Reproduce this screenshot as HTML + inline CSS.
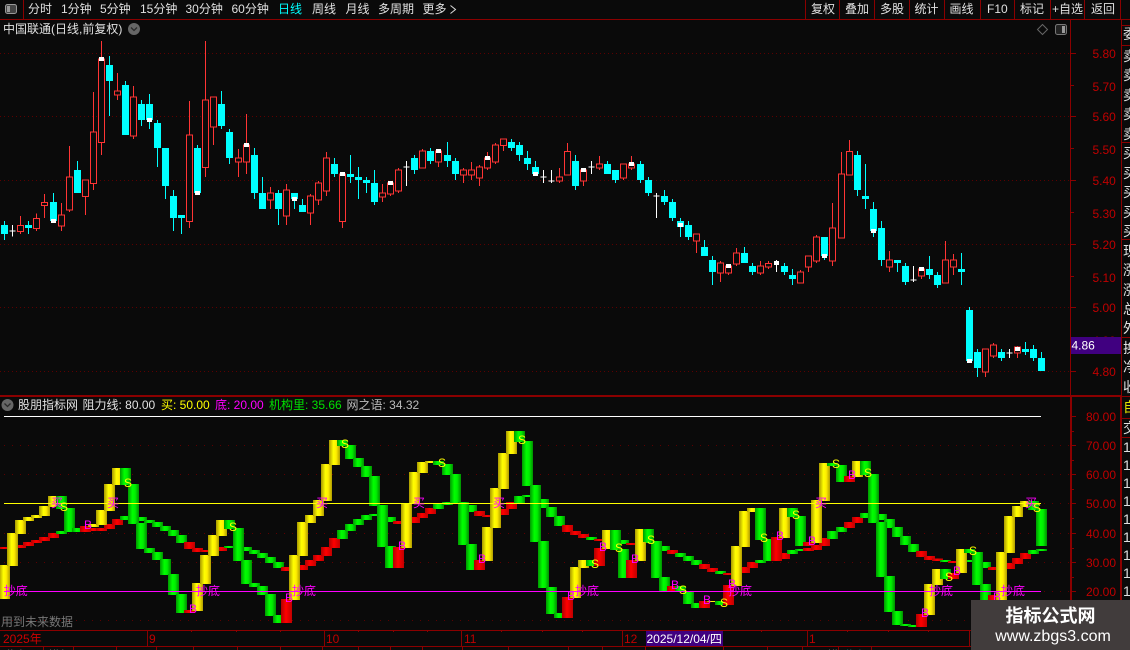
<!DOCTYPE html>
<html lang="zh">
<head>
<meta charset="utf-8">
<title>中国联通 日线</title>
<style>
html,body{margin:0;padding:0;background:#0a0a0a;width:1130px;height:650px;overflow:hidden}
svg{display:block;position:absolute;left:0;top:0}
text{font-family:"Liberation Sans","WenQuanYi Zen Hei","Noto Sans CJK SC",sans-serif;font-size:12px;fill:#e0e0e0;white-space:pre}
.ax{fill:#c00000}
.m{fill:#ff00ff;text-anchor:middle}
.s{fill:#ffff00;text-anchor:middle;font-size:12px}
.b{fill:#ff00ff;text-anchor:middle;font-size:12px}
.n{vector-effect:non-scaling-stroke;fill:none}
.y,.g,.r{width:11px}
.y{fill:url(#gy)}.g{fill:url(#gg)}.r{fill:url(#gr)}
</style>
</head>
<body>
<svg width="1130" height="650" viewBox="0 0 1130 650">
<defs>
<linearGradient id="gy"><stop offset="0" stop-color="#a89800"/><stop offset=".4" stop-color="#ffff00"/><stop offset=".65" stop-color="#ffee00"/><stop offset="1" stop-color="#b09c00"/></linearGradient>
<linearGradient id="gg"><stop offset="0" stop-color="#009800"/><stop offset=".4" stop-color="#00ff00"/><stop offset=".65" stop-color="#00ee00"/><stop offset="1" stop-color="#009000"/></linearGradient>
<linearGradient id="gr"><stop offset="0" stop-color="#b00000"/><stop offset=".45" stop-color="#ff0000"/><stop offset="1" stop-color="#c00000"/></linearGradient>
</defs>

<!-- grid main -->
<g stroke="#5c0000" stroke-dasharray="1 3" shape-rendering="crispEdges">
<path d="M0 53.5H1070M0 116.5H1070M0 180.5H1070M0 244.5H1070M0 307.5H1070M0 371.5H1070"/>
</g>
<!-- grid indicator -->
<g stroke="#5c0000" stroke-dasharray="1 7" shape-rendering="crispEdges">
<path d="M4 445.5H1070M4 474.5H1070M4 503.5H1070M4 533.5H1070M4 562.5H1070M4 591.5H1070M4 620.5H1070"/>
</g>

<!-- candles -->
<g transform="translate(.5,0) scale(1,.33333)" shape-rendering="crispEdges">
<path class="n" stroke="#00ffff" stroke-width="1" d="M4 663V720M28 663V702M53 579V668M77 483V579M109 168V348M125 243V405M141 300V378M149 282V387M157 360V501M165 444V597M173 570V693M181 645V702M197 435V585M221 273V387M229 387V492M254 444V597M262 531V627M278 570V675M294 579V627M302 597V636M334 474V531M350 465V549M358 501V597M366 531V579M374 510V615M414 465V522M430 444V492M447 426V501M455 474V540M511 417V453M519 426V483M527 453V510M535 483V528M575 465V570M607 483V522M615 510V549M640 483V549M648 531V588M664 570V615M672 597V663M680 654V711M688 663V720M704 720V768M712 768V855M744 741V789M752 789V825M784 789V825M792 807V855M824 711V780M857 453V588M865 492V627M873 606V711M881 663V798M897 780V816M905 789V855M929 768V837M937 816V864M961 759V855M969 921V1089M977 1047V1131M1001 1047V1083M1025 1026V1065M1033 1035V1083M1041 1056V1113"/>
<path class="n" stroke="#00ffff" stroke-width="7" d="M4 675V702M28 675V684M53 606V663M77 510V579M109 195V243M125 255V405M141 312V360M149 312V360M157 369V444M165 444V558M173 588V654M181 645V654M197 444V579M221 312V378M229 396V474M254 465V579M262 579V627M278 579V627M294 579V597M302 615V636M334 492V522M350 522V531M358 531V540M366 540V549M374 549V606M414 474V510M430 453V483M447 465V483M455 483V522M511 426V444M519 435V465M527 474V492M535 501V522M575 483V558M607 492V522M615 510V540M640 492V540M648 540V579M664 588V606M672 606V654M680 663V681M688 675V711M704 741V768M712 780V816M744 759V789M752 798V816M784 798V816M792 825V837M824 711V768M857 465V570M865 588V597M873 627V693M881 684V780M897 780V789M905 798V846M929 807V825M937 825V855M961 807V816M969 930V1083M977 1056V1104M1001 1056V1074M1025 1047V1056M1033 1047V1074M1041 1074V1113"/>
<path class="n" stroke="#ff3434" stroke-width="1" d="M20 648V702M36 640V693M44 582V654M61 609V693M69 438V636M85 540V645M93 276V570M101 123V465M117 219V300M133 258V417M189 303V684M205 123V531M213 291V435M238 447V531M246 342V522M270 561V627M286 552V675M310 582V675M318 543V615M326 456V588M342 516V684M382 552V606M390 543V588M398 504V579M422 447V504M438 447V501M463 504V549M471 486V540M479 495V558M487 456V510M495 429V492M503 417V453M559 504V549M567 429V525M583 504V558M599 468V510M623 492V540M631 468V510M696 702V759M720 783V846M728 792V825M736 744V798M760 783V825M768 783V807M800 810V849M808 768V816M816 705V789M832 609V798M841 456V714M849 420V525M889 753V816M921 801V837M945 723V849M953 762V825M985 1047V1131M993 1029V1074M1017 1038V1074"/>
<path class="n" stroke="#ff3434" stroke-width="1" style="fill:#0a0a0a" d="M17 676h6V695h-6zM33 655h6V686h-6zM41 607h6V617h-6zM58 645h6V678h-6zM66 531h6V630h-6zM82 540h6V590h-6zM90 396h6V551h-6zM98 177h6V428h-6zM114 273h6V285h-6zM130 291h6V408h-6zM186 405h6V665h-6zM202 300h6V503h-6zM210 291h6V381h-6zM235 474h6V486h-6zM243 435h6V486h-6zM267 579h6V600h-6zM283 570h6V648h-6zM307 588h6V639h-6zM315 549h6V600h-6zM323 474h6V573h-6zM339 522h6V665h-6zM379 579h6V591h-6zM387 549h6V582h-6zM395 510h6V573h-6zM419 453h6V504h-6zM435 453h6V486h-6zM460 510h6V525h-6zM468 510h6V525h-6zM476 501h6V534h-6zM484 474h6V504h-6zM492 435h6V486h-6zM500 417h6V436h-6zM556 531h6V543h-6zM564 454h6V525h-6zM580 510h6V543h-6zM596 492h6V504h-6zM620 492h6V534h-6zM628 492h6V504h-6zM693 702h6V723h-6zM717 789h6V819h-6zM725 798h6V819h-6zM733 759h6V792h-6zM757 798h6V819h-6zM765 790h6V801h-6zM797 816h6V849h-6zM805 768h6V801h-6zM813 711h6V783h-6zM829 684h6V783h-6zM838 522h6V714h-6zM846 454h6V525h-6zM886 780h6V801h-6zM918 807h6V828h-6zM942 780h6V849h-6zM950 780h6V801h-6zM982 1047h6V1116h-6zM990 1035h6V1068h-6zM1014 1041h6V1059h-6z"/>
<path class="n" stroke="#ffffff" stroke-width="1" d="M12 675V710M9 693h6M406 483V558M403 501h6M543 510V549M540 531h6M551 510V549M548 543h6M591 483V522M588 501h6M656 579V654M653 588h6M776 780V816M913 798V846M910 840h6M1009 1047V1074M1006 1059h6"/>
<path class="n" stroke="#ffffff" stroke-width="5" d="M53 657V669M101 171V183M149 354V366M197 573V585M246 429V441M294 591V603M342 516V528M390 543V555M438 447V459M487 468V480M535 516V528M583 504V516M631 486V498M680 669V681M728 792V804M776 783V795M824 762V774M873 687V699M921 801V813M969 1077V1089M1017 1041V1053"/>
</g>

<!-- indicator -->
<g transform="translate(0,395) scale(1,.33333)" shape-rendering="crispEdges">
<!-- slow -->
<rect class="r" x="-1" y="456" height="6"/><rect class="r" x="15" y="450" height="9"/><rect class="r" x="23" y="441" height="12"/><rect class="r" x="31" y="435" height="9"/><rect class="r" x="39" y="426" height="12"/><rect class="r" x="48" y="414" height="15"/><rect class="g" x="56" y="408" height="9"/><rect class="g" x="64" y="402" height="9"/><rect class="g" x="72" y="399" height="12"/><rect class="r" x="80" y="393" height="18"/><rect class="r" x="88" y="399" height="9"/><rect class="r" x="96" y="399" height="9"/><rect class="r" x="104" y="387" height="15"/><rect class="r" x="112" y="372" height="18"/><rect class="g" x="120" y="363" height="12"/><rect class="g" x="128" y="363" height="15"/><rect class="g" x="136" y="366" height="12"/><rect class="g" x="144" y="375" height="9"/><rect class="g" x="152" y="381" height="15"/><rect class="g" x="160" y="393" height="15"/><rect class="g" x="168" y="405" height="18"/><rect class="g" x="176" y="420" height="24"/><rect class="r" x="184" y="441" height="21"/><rect class="r" x="192" y="459" height="12"/><rect class="r" x="200" y="465" height="6"/><rect class="r" x="216" y="456" height="12"/><rect class="g" x="224" y="453" height="6"/><rect class="g" x="241" y="456" height="12"/><rect class="g" x="249" y="465" height="12"/><rect class="g" x="257" y="474" height="15"/><rect class="g" x="265" y="486" height="18"/><rect class="g" x="273" y="501" height="18"/><rect class="r" x="281" y="516" height="12"/><rect class="r" x="297" y="510" height="15"/><rect class="r" x="305" y="495" height="18"/><rect class="r" x="313" y="480" height="18"/><rect class="r" x="321" y="456" height="27"/><rect class="r" x="329" y="429" height="30"/><rect class="g" x="337" y="405" height="27"/><rect class="g" x="345" y="387" height="21"/><rect class="g" x="353" y="372" height="18"/><rect class="g" x="361" y="360" height="15"/><rect class="g" x="369" y="357" height="6"/><rect class="g" x="385" y="366" height="15"/><rect class="r" x="393" y="378" height="9"/><rect class="r" x="409" y="366" height="18"/><rect class="r" x="417" y="354" height="15"/><rect class="r" x="425" y="339" height="18"/><rect class="g" x="433" y="327" height="15"/><rect class="g" x="442" y="321" height="9"/><rect class="g" x="466" y="330" height="21"/><rect class="r" x="474" y="348" height="15"/><rect class="r" x="482" y="360" height="6"/><rect class="r" x="498" y="342" height="18"/><rect class="r" x="506" y="321" height="21"/><rect class="g" x="514" y="303" height="21"/><rect class="g" x="522" y="300" height="6"/><rect class="g" x="538" y="312" height="27"/><rect class="g" x="546" y="336" height="30"/><rect class="g" x="554" y="363" height="30"/><rect class="r" x="562" y="390" height="21"/><rect class="r" x="570" y="408" height="12"/><rect class="r" x="578" y="417" height="12"/><rect class="g" x="586" y="426" height="9"/><rect class="r" x="594" y="432" height="6"/><rect class="g" x="618" y="435" height="12"/><rect class="r" x="626" y="444" height="6"/><rect class="g" x="643" y="441" height="3"/><rect class="g" x="659" y="453" height="15"/><rect class="r" x="667" y="465" height="12"/><rect class="g" x="675" y="474" height="12"/><rect class="g" x="683" y="483" height="15"/><rect class="g" x="691" y="495" height="15"/><rect class="r" x="699" y="507" height="15"/><rect class="r" x="707" y="519" height="12"/><rect class="g" x="715" y="528" height="9"/><rect class="r" x="723" y="534" height="6"/><rect class="r" x="739" y="516" height="18"/><rect class="r" x="747" y="501" height="18"/><rect class="g" x="755" y="495" height="9"/><rect class="r" x="779" y="474" height="18"/><rect class="g" x="787" y="465" height="12"/><rect class="g" x="795" y="462" height="6"/><rect class="r" x="803" y="459" height="9"/><rect class="r" x="811" y="450" height="15"/><rect class="r" x="819" y="429" height="24"/><rect class="g" x="827" y="408" height="24"/><rect class="g" x="836" y="396" height="15"/><rect class="r" x="844" y="381" height="18"/><rect class="r" x="852" y="366" height="18"/><rect class="g" x="860" y="354" height="15"/><rect class="g" x="868" y="357" height="18"/><rect class="g" x="876" y="357" height="18"/><rect class="g" x="884" y="372" height="27"/><rect class="g" x="892" y="396" height="30"/><rect class="g" x="900" y="423" height="27"/><rect class="g" x="908" y="447" height="24"/><rect class="r" x="916" y="468" height="18"/><rect class="r" x="924" y="483" height="12"/><rect class="r" x="932" y="491" height="7"/><rect class="g" x="940" y="495" height="6"/><rect class="r" x="948" y="498" height="6"/><rect class="g" x="964" y="495" height="6"/><rect class="g" x="980" y="501" height="18"/><rect class="r" x="988" y="516" height="9"/><rect class="r" x="1004" y="504" height="18"/><rect class="r" x="1012" y="489" height="18"/><rect class="r" x="1020" y="474" height="18"/><rect class="g" x="1028" y="465" height="12"/><rect class="g" x="1036" y="462" height="6"/>
<!-- main -->
<rect class="y" x="-1" y="510" height="102"/><rect class="y" x="7" y="414" height="99"/><rect class="y" x="15" y="375" height="42"/><rect class="y" x="23" y="366" height="12"/><rect class="y" x="31" y="360" height="9"/><rect class="y" x="39" y="333" height="30"/><rect class="y" x="48" y="303" height="33"/><rect class="g" x="56" y="303" height="39"/><rect class="g" x="64" y="339" height="63"/><rect class="g" x="72" y="399" height="12"/><rect class="r" x="80" y="393" height="18"/><rect class="y" x="88" y="387" height="9"/><rect class="y" x="96" y="345" height="45"/><rect class="y" x="104" y="267" height="81"/><rect class="y" x="112" y="219" height="51"/><rect class="g" x="120" y="219" height="51"/><rect class="g" x="128" y="267" height="120"/><rect class="g" x="136" y="384" height="78"/><rect class="g" x="144" y="459" height="15"/><rect class="g" x="152" y="471" height="24"/><rect class="g" x="160" y="492" height="48"/><rect class="g" x="168" y="537" height="63"/><rect class="g" x="176" y="597" height="57"/><rect class="r" x="184" y="645" height="9"/><rect class="y" x="192" y="564" height="84"/><rect class="y" x="200" y="480" height="87"/><rect class="y" x="208" y="420" height="63"/><rect class="y" x="216" y="375" height="48"/><rect class="g" x="224" y="375" height="27"/><rect class="g" x="233" y="399" height="99"/><rect class="g" x="241" y="495" height="72"/><rect class="g" x="249" y="564" height="12"/><rect class="g" x="257" y="573" height="27"/><rect class="g" x="265" y="597" height="66"/><rect class="g" x="273" y="660" height="24"/><rect class="r" x="281" y="612" height="72"/><rect class="y" x="289" y="480" height="135"/><rect class="y" x="297" y="381" height="102"/><rect class="y" x="305" y="360" height="24"/><rect class="y" x="313" y="315" height="48"/><rect class="y" x="321" y="207" height="111"/><rect class="y" x="329" y="135" height="75"/><rect class="g" x="337" y="135" height="18"/><rect class="g" x="345" y="150" height="42"/><rect class="g" x="353" y="189" height="27"/><rect class="g" x="361" y="213" height="33"/><rect class="g" x="369" y="243" height="90"/><rect class="g" x="377" y="330" height="126"/><rect class="g" x="385" y="453" height="66"/><rect class="r" x="393" y="456" height="63"/><rect class="y" x="401" y="324" height="135"/><rect class="y" x="409" y="231" height="96"/><rect class="y" x="417" y="201" height="33"/><rect class="y" x="425" y="198" height="6"/><rect class="g" x="433" y="198" height="12"/><rect class="g" x="442" y="207" height="33"/><rect class="g" x="450" y="237" height="87"/><rect class="g" x="458" y="321" height="129"/><rect class="g" x="466" y="447" height="78"/><rect class="r" x="474" y="495" height="30"/><rect class="y" x="482" y="396" height="102"/><rect class="y" x="490" y="279" height="120"/><rect class="y" x="498" y="174" height="108"/><rect class="y" x="506" y="108" height="69"/><rect class="g" x="514" y="108" height="33"/><rect class="g" x="522" y="138" height="135"/><rect class="g" x="530" y="270" height="171"/><rect class="g" x="538" y="438" height="141"/><rect class="g" x="546" y="576" height="81"/><rect class="g" x="554" y="654" height="15"/><rect class="r" x="562" y="606" height="63"/><rect class="y" x="570" y="516" height="93"/><rect class="y" x="578" y="495" height="24"/><rect class="g" x="586" y="495" height="18"/><rect class="r" x="594" y="459" height="54"/><rect class="y" x="602" y="405" height="57"/><rect class="g" x="610" y="405" height="60"/><rect class="g" x="618" y="462" height="87"/><rect class="r" x="626" y="495" height="54"/><rect class="y" x="635" y="402" height="96"/><rect class="g" x="643" y="402" height="39"/><rect class="g" x="651" y="438" height="111"/><rect class="g" x="659" y="546" height="42"/><rect class="r" x="667" y="573" height="15"/><rect class="g" x="675" y="573" height="18"/><rect class="g" x="683" y="588" height="39"/><rect class="g" x="691" y="624" height="15"/><rect class="r" x="699" y="618" height="21"/><rect class="y" x="707" y="618" height="3"/><rect class="g" x="715" y="618" height="12"/><rect class="r" x="723" y="570" height="60"/><rect class="y" x="731" y="453" height="120"/><rect class="y" x="739" y="348" height="108"/><rect class="y" x="747" y="339" height="12"/><rect class="g" x="755" y="339" height="96"/><rect class="g" x="763" y="432" height="66"/><rect class="r" x="771" y="426" height="72"/><rect class="y" x="779" y="339" height="90"/><rect class="g" x="787" y="339" height="27"/><rect class="g" x="795" y="363" height="90"/><rect class="r" x="803" y="441" height="12"/><rect class="y" x="811" y="315" height="129"/><rect class="y" x="819" y="204" height="114"/><rect class="g" x="827" y="204" height="9"/><rect class="g" x="836" y="210" height="51"/><rect class="r" x="844" y="243" height="18"/><rect class="y" x="852" y="198" height="48"/><rect class="g" x="860" y="198" height="42"/><rect class="g" x="868" y="237" height="147"/><rect class="g" x="876" y="381" height="165"/><rect class="g" x="884" y="543" height="108"/><rect class="g" x="892" y="648" height="42"/><rect class="g" x="900" y="687" height="6"/><rect class="g" x="908" y="690" height="6"/><rect class="r" x="916" y="657" height="39"/><rect class="y" x="924" y="567" height="93"/><rect class="y" x="932" y="522" height="48"/><rect class="g" x="940" y="522" height="30"/><rect class="r" x="948" y="534" height="18"/><rect class="y" x="956" y="462" height="72"/><rect class="g" x="964" y="462" height="12"/><rect class="g" x="972" y="471" height="99"/><rect class="g" x="980" y="567" height="70"/><rect class="r" x="988" y="600" height="30"/><rect class="y" x="996" y="471" height="150"/><rect class="y" x="1004" y="363" height="111"/><rect class="y" x="1012" y="333" height="33"/><rect class="y" x="1020" y="318" height="18"/><rect class="g" x="1028" y="318" height="27"/><rect class="g" x="1036" y="342" height="111"/>
</g>

<!-- threshold lines -->
<g shape-rendering="crispEdges">
<rect x="4" y="416" width="1037" height="1" fill="#ffffff"/>
<rect x="4" y="503" width="1037" height="1" fill="#ffff00"/>
<rect x="4" y="591" width="1037" height="1" fill="#ff00ff"/>
</g>

<!-- signal labels -->
<g dominant-baseline="central">
<text class="m" x="15.7" y="591">抄底</text><text class="m" x="57" y="503">买</text><text class="s" x="64" y="507">S</text><text class="b" x="88" y="525">B</text><text class="m" x="113" y="503">买</text><text class="s" x="128" y="483">S</text><text class="b" x="193" y="609">B</text><text class="m" x="208" y="591">抄底</text><text class="s" x="233" y="527">S</text><text class="b" x="289" y="598">B</text><text class="m" x="304" y="591">抄底</text><text class="m" x="322" y="503">买</text><text class="s" x="345" y="444">S</text>
<text class="b" x="402" y="546">B</text><text class="m" x="419" y="503">买</text><text class="s" x="442" y="463">S</text><text class="b" x="482" y="559">B</text><text class="m" x="499" y="503">买</text><text class="s" x="522" y="440">S</text><text class="b" x="571" y="596">B</text><text class="m" x="587" y="591">抄底</text><text class="s" x="595" y="564">S</text><text class="b" x="603" y="547">B</text><text class="s" x="619" y="548">S</text><text class="b" x="635" y="559">B</text><text class="s" x="651" y="540">S</text><text class="b" x="675" y="585">B</text><text class="s" x="683" y="590">S</text><text class="b" x="707" y="600">B</text><text class="s" x="724" y="603">S</text><text class="b" x="732" y="584">B</text><text class="m" x="740" y="591">抄底</text>
<text class="s" x="764" y="538">S</text><text class="b" x="780" y="536">B</text><text class="s" x="796" y="515">S</text><text class="b" x="812" y="541">B</text><text class="m" x="821" y="503">买</text><text class="s" x="836" y="464">S</text><text class="b" x="852" y="475">B</text><text class="s" x="868" y="473">S</text><text class="b" x="925" y="613">B</text><text class="m" x="941" y="591">抄底</text><text class="s" x="949" y="577">S</text><text class="b" x="957" y="571">B</text><text class="s" x="973" y="551">S</text><text class="b" x="997" y="597">B</text><text class="m" x="1013" y="591">抄底</text><text class="m" x="1031" y="503">买</text><text class="s" x="1037" y="508">S</text>
</g>

<!-- frame lines -->
<g fill="#8b0000" shape-rendering="crispEdges">
<rect x="0" y="19" width="1130" height="1"/>
<rect x="0" y="395" width="1122" height="2"/>
<rect x="0" y="630" width="971" height="1"/>
<rect x="0" y="646" width="971" height="1"/>
<rect x="1070" y="19" width="1" height="376"/>
<rect x="1070" y="395" width="2" height="205"/>
<rect x="1121" y="19" width="1" height="376"/>
<rect x="1120" y="395" width="2" height="205"/>
<rect x="1122" y="25" width="8" height="1"/><rect x="1122" y="45" width="8" height="1"/><rect x="1122" y="142" width="8" height="1"/><rect x="1122" y="239" width="8" height="1"/><rect x="1122" y="337" width="8" height="1"/><rect x="1122" y="396" width="8" height="1"/><rect x="1122" y="418" width="8" height="1"/><rect x="1122" y="437" width="8" height="1"/>
<!-- toolbar separators -->
<rect x="23" y="0" width="1" height="19"/><rect x="805" y="0" width="1" height="19"/><rect x="839" y="0" width="1" height="19"/><rect x="874" y="0" width="1" height="19"/><rect x="909" y="0" width="1" height="19"/><rect x="944" y="0" width="1" height="19"/><rect x="980" y="0" width="1" height="19"/><rect x="1014" y="0" width="1" height="19"/><rect x="1050" y="0" width="1" height="19"/><rect x="1084" y="0" width="1" height="19"/><rect x="1120" y="0" width="1" height="19"/>
<!-- axis ticks -->
<rect x="1071" y="53" width="5" height="1"/><rect x="1071" y="85" width="3" height="1"/><rect x="1071" y="116" width="5" height="1"/><rect x="1071" y="148" width="3" height="1"/><rect x="1071" y="180" width="5" height="1"/><rect x="1071" y="212" width="3" height="1"/><rect x="1071" y="244" width="5" height="1"/><rect x="1071" y="276" width="3" height="1"/><rect x="1071" y="307" width="5" height="1"/><rect x="1071" y="371" width="5" height="1"/>
<rect x="1072" y="416" width="4" height="1"/><rect x="1072" y="431" width="2" height="1"/><rect x="1072" y="445" width="4" height="1"/><rect x="1072" y="460" width="2" height="1"/><rect x="1072" y="474" width="4" height="1"/><rect x="1072" y="489" width="2" height="1"/><rect x="1072" y="503" width="4" height="1"/><rect x="1072" y="518" width="2" height="1"/><rect x="1072" y="533" width="4" height="1"/><rect x="1072" y="548" width="2" height="1"/><rect x="1072" y="562" width="4" height="1"/><rect x="1072" y="577" width="2" height="1"/><rect x="1072" y="591" width="4" height="1"/>
<!-- time axis -->
<rect x="147" y="630" width="1" height="16"/><rect x="324" y="630" width="1" height="16"/><rect x="461" y="630" width="1" height="16"/><rect x="622" y="630" width="1" height="16"/><rect x="807" y="630" width="1" height="16"/><rect x="969" y="630" width="1" height="16"/>
<rect x="191" y="630" width="1" height="2"/><rect x="236" y="630" width="1" height="2"/><rect x="280" y="630" width="1" height="2"/><rect x="358" y="630" width="1" height="2"/><rect x="393" y="630" width="1" height="2"/><rect x="427" y="630" width="1" height="2"/><rect x="501" y="630" width="1" height="2"/><rect x="542" y="630" width="1" height="2"/><rect x="582" y="630" width="1" height="2"/><rect x="761" y="630" width="1" height="2"/><rect x="847" y="630" width="1" height="2"/><rect x="888" y="630" width="1" height="2"/><rect x="928" y="630" width="1" height="2"/>
<!-- bottom strip separators -->
<rect x="43" y="647" width="1" height="3"/><rect x="73" y="647" width="1" height="3"/><rect x="116" y="647" width="1" height="3"/><rect x="156" y="647" width="1" height="3"/><rect x="193" y="647" width="1" height="3"/><rect x="237" y="647" width="1" height="3"/><rect x="280" y="647" width="1" height="3"/><rect x="322" y="647" width="1" height="3"/><rect x="358" y="647" width="1" height="3"/><rect x="390" y="647" width="1" height="3"/><rect x="422" y="647" width="1" height="3"/><rect x="462" y="647" width="1" height="3"/><rect x="508" y="647" width="1" height="3"/><rect x="568" y="647" width="1" height="3"/><rect x="602" y="647" width="1" height="3"/><rect x="645" y="647" width="1" height="3"/><rect x="723" y="647" width="1" height="3"/><rect x="767" y="647" width="1" height="3"/><rect x="802" y="647" width="1" height="3"/><rect x="838" y="647" width="1" height="3"/><rect x="871" y="647" width="1" height="3"/>
</g>

<!-- toolbar -->
<g>
<rect x="5.5" y="4.5" width="11" height="9" rx="2" fill="#444" stroke="#999"/><rect x="7" y="6" width="3" height="6" fill="#999"/>
<text x="28" y="13">分时</text><text x="61" y="13">1分钟</text><text x="100" y="13">5分钟</text><text x="140" y="13">15分钟</text><text x="185.5" y="13">30分钟</text><text x="231.5" y="13">60分钟</text><text x="278" y="13" style="fill:#00ffff">日线</text><text x="312" y="13">周线</text><text x="345.5" y="13">月线</text><text x="378" y="13">多周期</text><text x="422.5" y="13">更多</text>
<path d="M450.5 5.5L455.5 9.5L450.5 13.5" fill="none" stroke="#ddd"/>
<text x="811" y="13">复权</text><text x="845" y="13">叠加</text><text x="880" y="13">多股</text><text x="914.5" y="13">统计</text><text x="949.5" y="13">画线</text><text x="987" y="13">F10</text><text x="1020" y="13">标记</text><text x="1052" y="13">+自选</text><text x="1091" y="13">返回</text>
</g>

<!-- title -->
<text x="3" y="33">中国联通(日线,前复权)</text>
<circle cx="134" cy="29" r="6" fill="#666"/><path d="M131 27.5L134 30.5L137 27.5" fill="none" stroke="#2a2a2a" stroke-width="1.3"/>
<path d="M1042.5 24.5L1047.5 29.5L1042.5 34.5L1037.5 29.5Z" fill="none" stroke="#666"/>
<rect x="1055.5" y="24.5" width="11" height="10" rx="2" fill="#222" stroke="#777"/><rect x="1062" y="26" width="3" height="7" fill="#999"/>

<!-- price axis labels -->
<g>
<text class="ax" x="1092.5" y="58">5.80</text><text class="ax" x="1092.5" y="91">5.70</text><text class="ax" x="1092.5" y="121">5.60</text><text class="ax" x="1092.5" y="154">5.50</text><text class="ax" x="1092.5" y="185">5.40</text><text class="ax" x="1092.5" y="218">5.30</text><text class="ax" x="1092.5" y="249">5.20</text><text class="ax" x="1092.5" y="282">5.10</text><text class="ax" x="1092.5" y="312">5.00</text><text class="ax" x="1092.5" y="345">4.90</text><text class="ax" x="1092.5" y="376">4.80</text>
<text class="ax" x="1086" y="421">80.00</text><text class="ax" x="1086" y="450">70.00</text><text class="ax" x="1086" y="479">60.00</text><text class="ax" x="1086" y="508">50.00</text><text class="ax" x="1086" y="538">40.00</text><text class="ax" x="1086" y="567">30.00</text><text class="ax" x="1086" y="596">20.00</text>
</g>
<rect x="1071" y="337" width="50" height="17" fill="#400080" shape-rendering="crispEdges"/>
<text x="1071.5" y="349.5" style="fill:#fff">4.86</text>

<!-- indicator header -->
<circle cx="7.5" cy="405" r="6" fill="#666"/><path d="M4.5 403.5L7.5 406.5L10.5 403.5" fill="none" stroke="#2a2a2a" stroke-width="1.3"/>
<text x="18" y="409">股朋指标网</text><text x="82.5" y="409">阻力线: 80.00</text><text x="161" y="409" style="fill:#ffff00">买: 50.00</text><text x="215" y="409" style="fill:#ff00ff">底: 20.00</text><text x="269" y="409" style="fill:#00e000">机构里: 35.66</text><text x="346.5" y="409" style="fill:#bbb">网之语: 34.32</text>

<text x="1" y="626" style="fill:#777">用到未来数据</text>

<!-- time axis labels -->
<g>
<text class="ax" x="3" y="643" style="fill:#d00000">2025年</text><text class="ax" x="149" y="643">9</text><text class="ax" x="326" y="643">10</text><text class="ax" x="464" y="643">11</text><text class="ax" x="624" y="643">12</text><text class="ax" x="809" y="643">1</text>
<rect x="646" y="631" width="77" height="15" fill="#400080" shape-rendering="crispEdges"/>
<text x="646.5" y="643" style="fill:#fff">2025/12/04/四</text>
</g>

<!-- bottom strip text (cut off by edge) -->
<text x="6" y="660">指标</text><text x="48" y="660">模板</text><text x="827" y="660">模</text><text x="845" y="660" style="fill:#00ffff">指标</text>

<!-- right column, clipped -->
<svg x="1123" y="20" width="7" height="580" viewBox="1123 20 7 580">
<g>
<text x="1123" y="39" style="font-size:14px">委</text>
<text x="1123" y="61" style="font-size:14px">卖</text><text x="1123" y="80" style="font-size:14px">卖</text><text x="1123" y="100" style="font-size:14px">卖</text><text x="1123" y="119" style="font-size:14px">卖</text><text x="1123" y="139" style="font-size:14px">卖</text>
<text x="1123" y="158" style="font-size:14px">买</text><text x="1123" y="178" style="font-size:14px">买</text><text x="1123" y="197" style="font-size:14px">买</text><text x="1123" y="217" style="font-size:14px">买</text><text x="1123" y="236" style="font-size:14px">买</text>
<text x="1123" y="256" style="font-size:14px">现</text><text x="1123" y="275" style="font-size:14px">涨</text><text x="1123" y="295" style="font-size:14px">涨</text><text x="1123" y="314" style="font-size:14px">总</text><text x="1123" y="333" style="font-size:14px">外</text><text x="1123" y="353" style="font-size:14px">换</text><text x="1123" y="372" style="font-size:14px">净</text><text x="1123" y="392" style="font-size:14px">收</text>
<text x="1123" y="412" style="font-size:14px;fill:#e0e000">自</text><text x="1123" y="433" style="font-size:14px">交</text>
<text x="1123" y="452" style="font-size:14px">1</text><text x="1123" y="470" style="font-size:14px">1</text><text x="1123" y="488" style="font-size:14px">1</text><text x="1123" y="506" style="font-size:14px">1</text><text x="1123" y="524" style="font-size:14px">1</text><text x="1123" y="542" style="font-size:14px">1</text><text x="1123" y="560" style="font-size:14px">1</text><text x="1123" y="578" style="font-size:14px">1</text><text x="1123" y="596" style="font-size:14px">1</text>
</g>
</svg>

<!-- watermark -->
<rect x="971" y="600" width="159" height="50" fill="#413c3c"/>
<text x="1050.5" y="622" style="font-size:18px;font-weight:bold;fill:#fff;text-anchor:middle">指标公式网</text>
<text x="1053" y="641" style="font-size:16px;fill:#fff;text-anchor:middle">www.zbgs3.com</text>
</svg>
</body>
</html>
